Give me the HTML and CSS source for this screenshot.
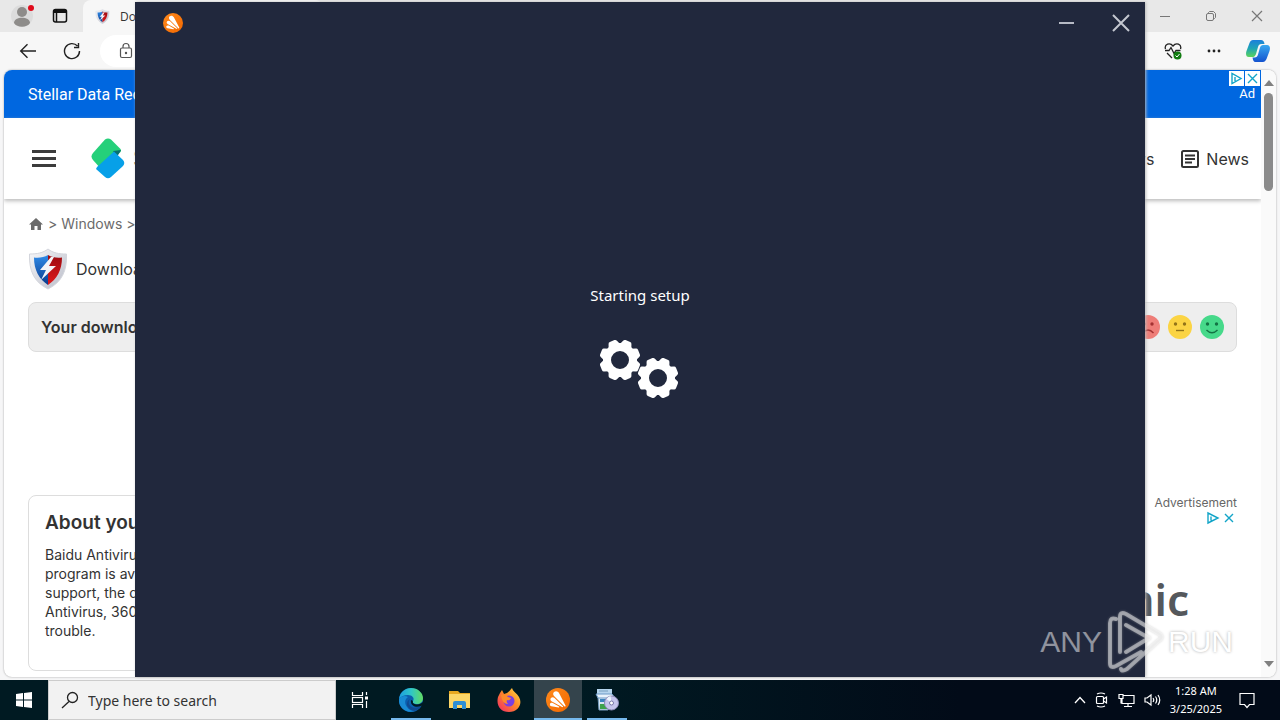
FILE: index.html
```html
<!DOCTYPE html>
<html lang="en">
<head>
<meta charset="utf-8">
<meta name="viewport" content="width=device-width, initial-scale=1">
<title>Desktop</title>
<link rel="stylesheet" href="styles.css">
</head>
<body>
<svg class="defs" aria-hidden="true">
  <defs>
    <linearGradient id="orange" x1="0" y1="0" x2="1" y2="1"><stop offset="0" stop-color="#ff8a1c"/><stop offset="1" stop-color="#f26700"/></linearGradient>
    <linearGradient id="blueShield" x1="0" y1="0" x2="0" y2="1"><stop offset="0" stop-color="#2f8be8"/><stop offset="1" stop-color="#0b3a8c"/></linearGradient>
    <linearGradient id="redShield" x1="0" y1="0" x2="0" y2="1"><stop offset="0" stop-color="#9c0a10"/><stop offset="1" stop-color="#e01a1c"/></linearGradient>
    <linearGradient id="silver" x1="0" y1="0" x2="1" y2="1"><stop offset="0" stop-color="#f8f8fa"/><stop offset="1" stop-color="#b9bcc8"/></linearGradient>
    <linearGradient id="edgeTop" x1="0" y1="0" x2="1" y2="0"><stop offset="0" stop-color="#1c9de0"/><stop offset=".5" stop-color="#2fc6c8"/><stop offset="1" stop-color="#62dc62"/></linearGradient>
    <linearGradient id="copA" x1="0" y1="0" x2="0" y2="1"><stop offset="0" stop-color="#1b7fdc"/><stop offset=".5" stop-color="#1fa5b5"/><stop offset="1" stop-color="#5bd35b"/></linearGradient>
    <linearGradient id="copB" x1="0" y1="0" x2="0" y2="1"><stop offset="0" stop-color="#38a8f0"/><stop offset="1" stop-color="#1453cf"/></linearGradient>
    <linearGradient id="fox" x1="1" y1="0" x2="0" y2="1"><stop offset="0" stop-color="#ffe04a"/><stop offset=".45" stop-color="#ff8a26"/><stop offset="1" stop-color="#f0246a"/></linearGradient>
    <symbol id="avast" viewBox="0 0 24 24">
      <circle cx="12" cy="12" r="12" fill="url(#orange)"/>
      <path d="M8 4c2-1.500 4-.5 5 1l6.500 12.500c.3 1-.5 1.300-1.200.7L8 8C7 7 6.800 5 8 4zM5 10c1-1 2.500-.8 3.500 0l8.500 8.200c.4.7-.2 1.200-1 .8L5.500 13.200c-1.200-.8-1.500-2.200-.5-3.200zM4 16c.5-1.200 1.700-1.300 2.800-1l6.200 3.500c.5.500 0 1-.5 1l-7-1.200c-1.200-.3-1.900-1.200-1.500-2.300z" fill="#fff"/>
    </symbol>
    <symbol id="shield" viewBox="0 0 40 42">
      <path d="M20 1c5 4 11 5 18.500 5C39 23 34 34 20 41 6 34 1 23 1.500 6 9 6 15 5 20 1z" fill="url(#silver)" stroke="#d3d5dc"/>
      <path d="M20 7c-4 2.500-9 3-14 2.500C6 22 11 31 20 37z" fill="url(#blueShield)"/>
      <path d="M20 7c4 2.500 9 3 14 2.500C34 22 29 31 20 37z" fill="url(#redShield)"/>
      <path d="M23 9 12 22h6l-5 10 15-14h-7l5-9z" fill="#f4f4f8"/>
    </symbol>
    <symbol id="gear" viewBox="-21 -21 42 42" overflow="visible">
      <circle r="13" fill="none" stroke="#fff" stroke-width="8"/>
      <g fill="#fff">
        <g id="teeth"><path id="tooth" d="M-6.500-14-4.500-19q.4-1.500 2-1.500h5q1.600 0 2 1.500l2 5z" transform="rotate(22.500)"/><use href="#tooth" transform="rotate(90)"/><use href="#tooth" transform="rotate(180)"/><use href="#tooth" transform="rotate(270)"/></g>
        <use href="#teeth" transform="rotate(45)"/>
      </g>
    </symbol>
  </defs>
</svg>

<div class="desktop">
  <div class="browser">
    <div class="tabstrip">
      <button class="icon-btn profile" aria-label="Profile"><svg width="28" height="28" viewBox="0 0 28 28"><circle cx="12" cy="16" r="11" fill="#dcdcdc"/><circle cx="12" cy="12" r="5" fill="#8e8c8a"/><path d="M4 23c0-7 16-7 16 0-3 5-13 5-16 0z" fill="#8e8c8a"/><circle cx="21" cy="8" r="3" fill="#e00b1c"/></svg></button>
      <button class="icon-btn tabs-btn" aria-label="Tab actions"><svg width="16" height="16" viewBox="0 0 16 16" fill="none" stroke="#111" stroke-width="1.500"><rect x="1.500" y="1.500" width="13" height="12.500" rx="2"/><path d="M1.500 3.500h13" stroke-width="3"/><path d="M4.500 5v9"/></svg></button>
      <div class="tab"><svg width="15" height="15"><use href="#shield"/></svg><span>Do</span></div>
      <div class="win-controls">
        <button class="icon-btn" aria-label="Minimize"><svg width="12" height="12" fill="none" stroke="#777"><path d="M1 6.500h10"/></svg></button>
        <button class="icon-btn" aria-label="Restore"><svg width="12" height="12" fill="none" stroke="#777"><rect x="1.500" y="3.500" width="7" height="7" rx="1.500"/><path d="M3.500 3.500v-1l1-1h4l2 2v4l-1 1h-1"/></svg></button>
        <button class="icon-btn" aria-label="Close"><svg width="12" height="12" fill="none" stroke="#777" stroke-width="1.200"><path d="m1 1 10 10M11 1 1 11"/></svg></button>
      </div>
    </div>
    <div class="toolbar">
      <button class="icon-btn" aria-label="Back"><svg width="18" height="16" fill="none" stroke="#222" stroke-width="1.400"><path d="M17 8H2M8.500 1.200 1.700 8l6.800 6.800"/></svg></button>
      <button class="icon-btn" aria-label="Refresh"><svg width="18" height="18" fill="none" stroke="#222" stroke-width="1.400"><path d="M14.500 4A7.500 7.500 0 1 0 16.500 9M15.500 1v4.500H11"/></svg></button>
      <div class="address"><svg width="14" height="18" fill="none" stroke="#555" stroke-width="1.200"><rect x="1.500" y="6" width="11" height="9.500" rx="1.500"/><path d="M4 6V4.500a3 3 0 0 1 6 0V6"/><circle cx="7" cy="11" r=".6" fill="#555"/></svg></div>
      <div class="tools">
        <button class="icon-btn" aria-label="Browser essentials"><svg width="18" height="18" viewBox="0 0 18 18" fill="none" stroke="#222" stroke-width="1.300"><path d="M1.500 7C0 2 6 0 9 4c3-4 9-2 7.500 3M1 8.500h4l2-3 3 6 2-3h4.500M3 11l5 5"/><circle cx="13.500" cy="13.500" r="4" fill="#107c10" stroke="none"/><path d="m11.500 13.500 1.500 1.500 2.500-3" stroke="#fff" stroke-width="1"/></svg></button>
        <button class="icon-btn" aria-label="More"><svg width="16" height="4" fill="#222"><circle cx="3" cy="2" r="1.400"/><circle cx="8" cy="2" r="1.400"/><circle cx="13" cy="2" r="1.400"/></svg></button>
        <button class="icon-btn" aria-label="Copilot"><svg width="24" height="24" viewBox="0 0 24 24"><path d="M7 1h8c2 0 3 1 3.500 4h-3c-2 0-3 1-3.500 3l-2 7c-.5 1.500-1.500 3-3 3H3c-3 0-3.500-3-2.500-6l3-8C4.200 2 5.500 1 7 1z" fill="url(#copA)"/><path d="M17 23H9.500C7.500 23 7 21 6.500 18.500h2c2 0 3-1 3.500-3l2-7C14.500 7 15.500 6 17 6h4c3 0 3.500 3 2.500 6l-3 8c-1 2-2 3-3.500 3z" fill="url(#copB)"/></svg></button>
      </div>
    </div>
    <div class="viewport">
      <main class="page">
        <div class="banner"><a href="#">Stellar Data Reco</a>
          <div class="ad-corner"><div class="ad-marks"><svg width="15" height="15"><path fill="#fff" d="M0 0h15v15H0z"/><path d="M3 2.500v10l9-5z M6 6v4" fill="none" stroke="#13a5c8" stroke-width="1.400"/></svg><svg width="15" height="15"><path fill="#fff" d="M0 0h15v15H0z"/><path d="m3 3 9 9m0-9-9 9" stroke="#13a5c8" stroke-width="1.400"/></svg></div><span>Ad</span></div>
        </div>
        <header class="site-header">
          <button class="icon-btn menu" aria-label="Menu"><svg width="24" height="17" fill="#3c3c3c"><path d="M0 0h24v3H0zM0 7h24v3H0zM0 14h24v3H0z"/></svg></button>
          <a href="#" class="logo" aria-label="Home"><svg width="34" height="41" viewBox="0 0 34 41"><path d="M14 1.500q3-2 6 0L29.500 11q1 1.500 0 3L10 31 2 22q-3-3.500 0-7z" fill="#25d07a"/><path d="m22 13 8-1-4 7z" fill="#08706e"/><path d="M23 13.500 32 22q2.500 3 0 6L20 39q-3 2.500-6 0L5 31l1-2z" fill="#07a0e8"/></svg></a>
          <span class="site-name">S</span>
          <nav><a href="#">Reviews</a><a href="#"><svg width="18" height="18" fill="none" stroke="#333" stroke-width="2"><rect x="1" y="1" width="16" height="16" rx="1.500"/><path d="M4 5.500h10M4 9h10M4 12.500h7"/></svg>News</a></nav>
        </header>
        <div class="crumbs"><svg width="16" height="14" fill="#6b6b6b"><path d="M8 1 1 7.500h2V13h3.500V9h3v4H13V7.500h2z"/></svg><span>&gt;</span><a href="#">Windows</a><span>&gt;</span></div>
        <div class="product"><svg width="40" height="42"><use href="#shield"/></svg><span>Downloadi</span></div>
        <div class="status"><strong>Your download</strong>
          <div class="faces">
            <button class="icon-btn" aria-label="Bad"><svg width="24" height="24"><circle cx="12" cy="12" r="12" fill="#ee7d78"/><g fill="#a43232"><circle cx="8" cy="9" r="1.700"/><circle cx="16" cy="9" r="1.700"/></g><path d="M6.500 18q5.500-6 11 0" fill="none" stroke="#a43232" stroke-width="1.400"/></svg></button>
            <button class="icon-btn" aria-label="Average"><svg width="24" height="24"><circle cx="12" cy="12" r="12" fill="#fbd444"/><g fill="#927419"><circle cx="7.500" cy="9" r="1.700"/><circle cx="16.500" cy="9" r="1.700"/></g><path d="M8 15.500h8" stroke="#927419" stroke-width="1.400"/></svg></button>
            <button class="icon-btn" aria-label="Good"><svg width="24" height="24"><circle cx="12" cy="12" r="12" fill="#46d98a"/><g fill="#137344"><circle cx="7.500" cy="9" r="1.700"/><circle cx="16.500" cy="9" r="1.700"/></g><path d="M6.500 15q5.500 5.500 11 0" fill="none" stroke="#137344" stroke-width="1.400"/></svg></button>
          </div>
        </div>
        <div class="columns">
          <section class="about"><h2>About your</h2><p>Baidu Antivirus<br>program is avai<br>support, the ca<br>Antivirus, 360 <br>trouble.</p></section>
          <aside class="side-ad"><span>Advertisement</span>
            <svg width="32" height="14" fill="none" stroke="#13a5c8" stroke-width="1.400"><path d="M3 2v10l10-5zM6 5.500v4M20 3l8 8m0-8-8 8"/></svg>
            <b>nic</b></aside>
        </div>
      </main>
      <div class="scrollbar"><svg width="10" height="6"><path d="M5 0 0 6h10z" fill="#808080"/></svg><div class="thumb"></div><svg width="10" height="6"><path d="M5 6 0 0h10z" fill="#808080"/></svg></div>
    </div>
  </div>

  <footer class="taskbar">
    <button class="start" aria-label="Start"><svg width="16" height="16" fill="#fff"><path d="m0 2 7-1v6.500H0zM8 .9 16 0v7.500H8zM0 8.500h7V15l-7-1zM8 8.500h8V16l-8-1z"/></svg></button>
    <label class="search"><svg width="18" height="18" fill="none" stroke="#222" stroke-width="1.300"><circle cx="11.500" cy="6.500" r="5"/><path d="M8 10.500 1 17"/></svg><input type="text" placeholder="Type here to search" aria-label="Search"></label>
    <button class="task view" aria-label="Task view"><svg width="18" height="16" fill="none" stroke="#fff" stroke-width="1.200"><path d="M1.500 0v3.500h10V0M1.500 16v-3.500h10V16M15.500 0v3M15.500 9v7"/><rect x="1.500" y="5.500" width="10" height="5"/><path d="M14 6h3" stroke-width="3"/></svg></button>
    <button class="task open" aria-label="Edge"><svg width="24" height="24" viewBox="0 0 24 24"><circle cx="12" cy="12" r="12" fill="#0b5eae"/><path d="M0 11C1 4 6 0 12 0c7 0 12 5 12 10 0 4-3 6-6 6-3 0-5-1-4-3 2-3-1-6-5-6-4 0-7 1.500-9 4z" fill="url(#edgeTop)"/><path d="M0 11c2-3 6-4 9-2-3 2-4 6-1 10 2 3 5 4 8 4C8 26-1 20 0 11z" fill="#198bd4"/><path d="M11 11c-4 5 2 12 11 7-3 6-10 6-13 1-2-3-1-6 2-8z" fill="#104a90"/><path d="M14 13c-1 2 1 3.500 4 3.500 2.500 0 5-1 6.500-3V17l-2.500 1c-5 2-11 0-10-6z" fill="#001a22"/></svg></button>
    <button class="task" aria-label="File Explorer"><svg width="22" height="20"><path d="M0 1h9l2 2h10v5H0z" fill="#e8a820"/><path d="M0 4h21v14H0z" fill="#fcd667"/><path d="M4 19v-6q0-2 2-2h9q2 0 2 2v6h-4v-4H8v4z" fill="#2d8ed4"/></svg></button>
    <button class="task" aria-label="Firefox"><svg width="24" height="24" viewBox="0 0 24 24"><path d="M3 5 5 2l2 4 3-1c2-1 3-3 5-5 1 4 5 5 7 9 4 7-1 15-10 15S-1 17 1 9z" fill="url(#fox)"/><circle cx="12" cy="13" r="5.500" fill="#7a3fe0"/><path d="M4 7q5-1 7 2l3 1q-1 3-4 2-1 2 1 4-6 0-7-9z" fill="#ff8a2a"/></svg></button>
    <button class="task open active" aria-label="Setup"><svg width="24" height="24"><use href="#avast"/></svg></button>
    <button class="task open" aria-label="Installer"><svg width="24" height="24"><path d="M2 1h15v6H2z" fill="#b6d5ee"/><path d="M4 3h9M3 9h10v13H4z" fill="#d6e6f4" stroke="#779ebe"/><path d="M5 11h6v3H5z" fill="#3b83be"/><path d="M5 16h7v5H5z" fill="#3ea24c"/><path d="M1 6h16l3 4H3z" fill="#e8f3fc" stroke="#6c99c6"/><circle cx="16.500" cy="15" r="7" fill="#c6c4ec" stroke="#8c8ab5"/><path d="m16.500 15-5-4a7 7 0 0 1 4-3z" fill="#edf6ff"/><circle cx="16.500" cy="15" r="2" fill="#fff" stroke="#7977a8"/></svg></button>
    <div class="tray">
      <button class="icon-btn" aria-label="Hidden icons"><svg width="12" height="8" fill="none" stroke="#fff" stroke-width="1.300"><path d="m1 7 5-5.500L11 7"/></svg></button>
      <button class="icon-btn" aria-label="Meet now"><svg width="14" height="16" fill="none" stroke="#fff" stroke-width="1.200"><rect x="1.500" y="4.500" width="7" height="7" rx="1"/><path d="m8.500 7 3-2v6l-3-2M2 2q4-2 8 0M2 14q4 2 8 0"/></svg></button>
      <button class="icon-btn" aria-label="Network"><svg width="17" height="15" fill="none" stroke="#fff" stroke-width="1.200"><path d="M5 2.500h11v8H4V6M10 10.500v3M6 13.500h8M1 1.500h4v4H1zM3 5.500v5"/></svg></button>
      <button class="icon-btn" aria-label="Volume"><svg width="17" height="14" fill="none" stroke="#fff" stroke-width="1.200"><path d="M1 5v4h2l4 3V2L3 5zM9 5q1.500 2 0 4M11.500 3.500q2.500 3.500 0 7M14 2q3.500 5 0 10"/></svg></button>
      <div class="clock"><time>1:28 AM</time><span>3/25/2025</span></div>
      <button class="icon-btn notes" aria-label="Notifications"><svg width="16" height="17" fill="none" stroke="#fff" stroke-width="1.200"><path d="M1 1.500h14v11h-4.500L8 15.500l-2.500-3H1z"/></svg></button>
    </div>
  </footer>

  <section class="setup" role="dialog" aria-label="Starting setup">
    <div class="setup-bar"><svg width="20" height="20"><use href="#avast"/></svg>
      <div class="setup-controls"><button class="icon-btn" aria-label="Minimize"><svg width="16" height="18" fill="none" stroke="#b6bac5" stroke-width="2"><path d="M1 9h15"/></svg></button><button class="icon-btn" aria-label="Close"><svg width="18" height="18" fill="none" stroke="#c4c7d0" stroke-width="2"><path d="m1 1 16 16M17 1 1 17"/></svg></button></div>
    </div>
    <div class="setup-body"><p>Starting setup</p><svg width="82" height="60"><use href="#gear" x="0" y="0" width="42" height="42"/><use href="#gear" x="38" y="18" width="42" height="42"/></svg></div>
  </section>

  <div class="watermark" aria-hidden="true"><span>ANY</span><svg width="58" height="64" viewBox="0 0 58 64" fill="none" stroke-linejoin="round" stroke-linecap="round"><path d="M10 9q-6-2-6 4v40q0 6 6 3l25-14M14 42V7q0-6 6-3l32 19q7 4 0 8L21 59q-5 3-6 0M20 15l23 13-23 14" stroke="#fff" stroke-opacity=".45" stroke-width="4"/></svg><span class="light">RUN</span></div>
</div>
</body>
</html>
```
FILE: styles.css
```css
* { box-sizing: border-box; }
body { margin: 0; font-family: Inter, "Open Sans", sans-serif; color: #333; }
a { color: inherit; text-decoration: none; }
svg { display: block; flex: none; }
.defs { position: absolute; width: 0; height: 0; }
button { border: 0; padding: 0; background: none; font: inherit; }
.icon-btn { display: flex; flex: none; align-items: center; justify-content: center; }

.desktop { position: relative; display: flex; flex-direction: column; height: 100vh; min-height: 640px; overflow: hidden; background: #f6f6f7; }
.browser { flex: 1; min-height: 0; display: flex; flex-direction: column; padding-bottom: 3px; }

.tabstrip { display: flex; height: 32px; flex: none; align-items: stretch; background: #e8e8e8; }
.profile { padding-left: 10px; padding-bottom: 4px; }
.tabs-btn { margin: 0 15px 0 14px; }
.tab { display: flex; align-items: center; gap: 10px; width: 240px; padding-left: 12px; border-radius: 8px 8px 0 0; background: #f7f7f7; font: 12px "Open Sans", sans-serif; }
.win-controls { display: flex; gap: 34px; margin-left: auto; padding-right: 17px; }

.toolbar { display: flex; flex: none; align-items: center; height: 38px; padding: 0 10px 0 19px; gap: 26px; background: #f7f7f7; }
.address { display: flex; flex: 1; align-items: center; height: 32px; margin-left: -7px; padding-left: 19px; border-radius: 16px; background: #fff; }
.tools { display: flex; align-items: center; gap: 24px; }

.viewport { display: flex; flex: 1; min-height: 0; margin: 0 4px; overflow: hidden; border-radius: 8px; background: #fff; box-shadow: 0 0 2px #999; }
.page { flex: 1; min-width: 0; }
.banner { display: flex; align-items: center; justify-content: space-between; height: 48px; padding-left: 24px; background: #0067e0; color: #fff; font: 16px Roboto, sans-serif; }
.ad-corner { display: flex; flex-direction: column; align-self: flex-start; align-items: flex-end; padding-top: 1px; font: 13px/16px Roboto, sans-serif; }
.ad-corner span { padding-right: 6px; }
.ad-marks { display: flex; gap: 1px; padding-right: 1px; }
.site-header { display: flex; align-items: center; height: 81px; padding: 0 12px 0 28px; box-shadow: 0 2px 4px #bbb; }
.logo { margin-left: 35px; }
.site-name { margin-left: 8px; font-size: 24px; }
.site-header nav { display: flex; gap: 27px; margin-left: auto; font-size: 16px; }
.site-header nav a { display: flex; align-items: center; gap: 7px; }
.crumbs { display: flex; align-items: center; gap: 4px; height: 49px; padding-left: 24px; color: #6b6b6b; font-size: 14px; }
.product { display: flex; align-items: center; gap: 8px; height: 42px; padding-left: 24px; font-size: 16px; }
.status { display: flex; align-items: center; justify-content: space-between; height: 50px; margin: 12px 24px 0; padding: 0 12px; border: 1px solid #ddd; border-radius: 8px; background: #eee; font-size: 16px; }
.status strong { font-weight: 600; }
.faces { display: flex; gap: 8px; }
.columns { display: flex; justify-content: space-between; margin: 143px 24px 0; }
.about { width: 800px; height: 176px; padding: 16px; border: 1px solid #ddd; border-radius: 8px; }
.about h2 { margin: 0 0 11px; font-size: 19px; line-height: 22px; font-weight: 600; }
.about p { margin: 0; font-size: 14px; line-height: 19px; }
.side-ad { display: flex; flex-direction: column; align-items: flex-end; color: #666; font-size: 12px; line-height: 16px; }
.side-ad b { margin: 48px 48px 0 0; color: #55585c; font: 600 44px/52px "Noto Sans", sans-serif; }
.scrollbar { display: flex; flex-direction: column; align-items: center; width: 15px; padding: 10px 0; background: #fafafa; }
.thumb { width: 9px; height: 98px; margin: 7px 0 auto; border-radius: 5px; background: #8b8b8b; }

.taskbar { display: flex; flex: none; height: 40px; background: linear-gradient(90deg, #001a22 45%, #020b18 75%); color: #fff; }
.start { display: flex; width: 48px; align-items: center; justify-content: center; }
.search { display: flex; width: 288px; align-items: center; gap: 9px; padding: 0 12px; border: 1px solid #ccc; background: #f2f2f2; }
.search input { flex: 1; min-width: 0; border: 0; padding: 0; outline: 0; background: none; font: 14px "Noto Sans", sans-serif; }
.search input::placeholder { color: #333; opacity: 1; }
.task { display: flex; width: 48px; margin-right: 1px; align-items: center; justify-content: center; background: linear-gradient(#76b9ed, #76b9ed) bottom / 0 2px no-repeat; }
.view { margin-right: 3px; }
.open { background-size: 40px 2px; }
.active { background-color: #34444c; background-size: 100% 2px; }
.tray { display: flex; align-items: center; gap: 9px; margin-left: auto; padding-right: 25px; }
.clock { display: flex; flex-direction: column; align-items: center; font: 11px/18px "Noto Sans", sans-serif; }
.notes { margin-left: 8px; }

.setup { position: absolute; top: 2px; right: 135px; bottom: 43px; left: 135px; display: flex; flex-direction: column; background: #21283d; color: #fff; box-shadow: 1px 0 3px #bbb; }
.setup-bar { display: flex; flex: none; align-items: center; justify-content: space-between; height: 42px; padding: 0 15px 0 28px; }
.setup-controls { display: flex; gap: 38px; }
.setup-body { display: flex; flex: 1; flex-direction: column; align-items: center; justify-content: center; gap: 32px; padding-bottom: 40px; }
.setup-body p { margin: 0; font: 15px/24px "Noto Sans", sans-serif; }

.watermark { position: absolute; right: 47px; bottom: 46px; display: flex; align-items: center; gap: 4px; color: rgba(255, 255, 255, .5); font: 30px/64px "Liberation Sans", sans-serif; }
.watermark .light { color: #fff; text-shadow: 0 0 3px #aaa; }
.watermark svg { filter: drop-shadow(0 0 1px #aaa); }
```
